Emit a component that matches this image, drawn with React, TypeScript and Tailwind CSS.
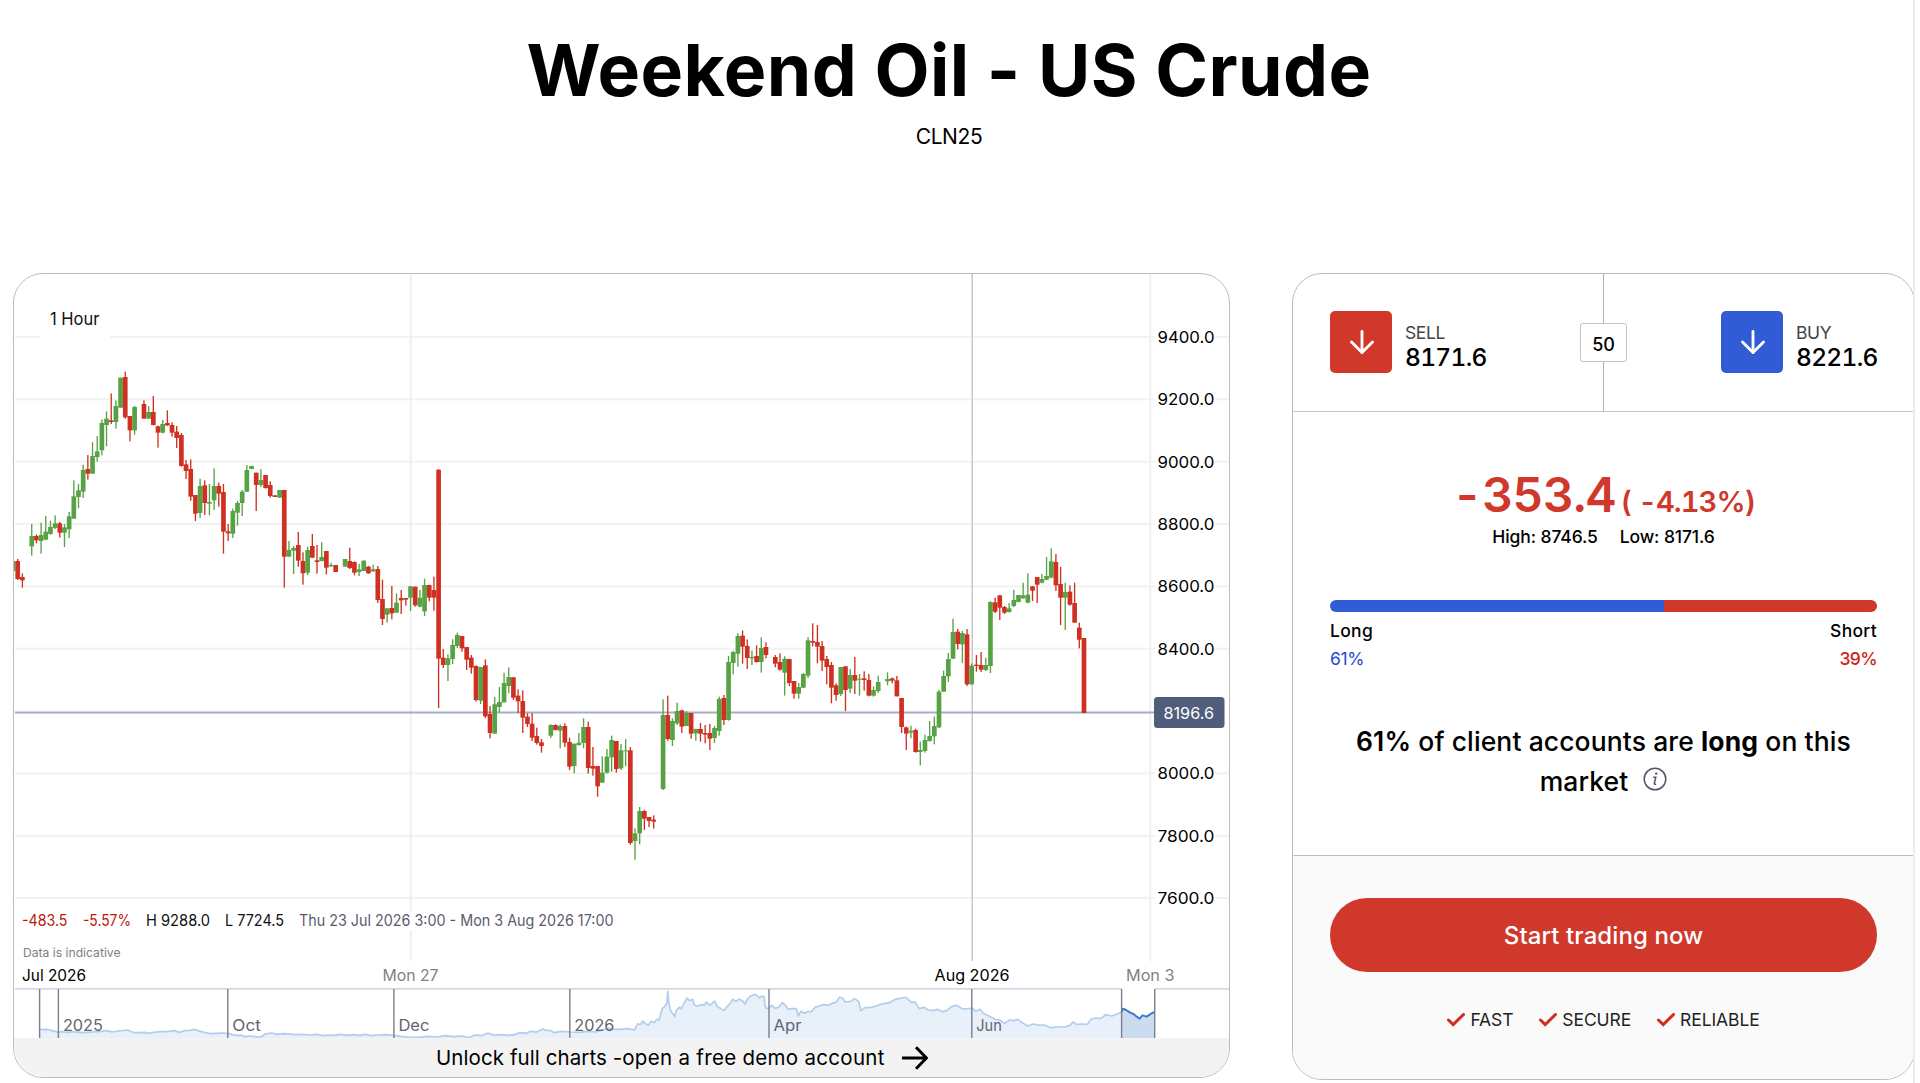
import { ArrowDown } from "lucide-react";

type Candle = [slot: number, high: number, top: number, bottom: number, low: number, up: 0 | 1];

// four runs of hourly candles, y values are thirds of a pixel below each run's own base
const runs: { base: number; candles: Candle[] }[] = [
  {
    base: 260,
    candles: [
      [-1, 904, 904, 933, 933, 1], [0, 897, 903, 957, 960, 0], [1, 940, 951, 961, 983, 0],
      [3, 792, 828, 859, 887, 1], [4, 823, 828, 841, 850, 0], [5, 788, 825, 843, 881, 1],
      [6, 768, 815, 839, 841, 1], [7, 782, 801, 822, 824, 1], [8, 766, 790, 804, 807, 1],
      [9, 786, 790, 818, 833, 0], [10, 792, 802, 818, 861, 1], [11, 756, 769, 808, 834, 1],
      [12, 661, 709, 776, 776, 1], [13, 672, 691, 711, 745, 1], [14, 614, 630, 695, 714, 1],
      [15, 585, 627, 641, 659, 0], [16, 547, 588, 641, 641, 1], [17, 528, 574, 591, 605, 1],
      [18, 478, 489, 571, 586, 1], [19, 454, 476, 495, 559, 1], [20, 400, 481, 486, 492, 0],
      [21, 421, 438, 486, 506, 1], [22, 353, 353, 443, 443, 1], [23, 335, 351, 472, 476, 0],
      [24, 468, 468, 511, 544, 0], [25, 438, 441, 511, 524, 1], [27, 421, 432, 476, 476, 0],
      [28, 438, 456, 476, 477, 1], [29, 408, 456, 495, 496, 0], [30, 497, 499, 518, 563, 0],
      [31, 480, 492, 518, 520, 1], [32, 451, 489, 496, 498, 0], [33, 487, 495, 518, 530, 0],
      [34, 498, 515, 534, 564, 0], [35, 519, 525, 618, 620, 0], [36, 600, 613, 633, 657, 0],
      [37, 598, 627, 710, 722, 0], [38, 705, 705, 761, 783, 0], [39, 656, 678, 759, 774, 1],
      [40, 661, 676, 729, 765, 0], [41, 672, 726, 731, 766, 1], [42, 625, 678, 721, 750, 1],
      [43, 668, 678, 701, 740, 0], [44, 672, 696, 815, 881, 0], [45, 792, 814, 820, 843, 0],
      [46, 746, 753, 821, 834, 1], [47, 723, 729, 758, 797, 1], [48, 690, 695, 729, 768, 1],
      [49, 615, 630, 695, 696, 1], [50, 617, 618, 627, 628, 1], [51, 638, 638, 675, 753, 0],
      [52, 627, 660, 675, 681, 1], [53, 645, 645, 684, 686, 0], [54, 664, 675, 708, 713, 0],
      [55, 706, 706, 711, 711, 0], [56, 690, 690, 713, 713, 1], [57, 690, 690, 890, 983, 0],
      [58, 843, 870, 890, 891, 1], [59, 858, 864, 872, 942, 1], [60, 816, 855, 902, 920, 0],
      [61, 877, 903, 940, 974, 0], [62, 860, 870, 938, 945, 1], [63, 822, 858, 893, 894, 0],
      [64, 855, 901, 906, 941, 0],
    ],
  },
  {
    base: 440,
    candles: [
      [65, 307, 351, 363, 364, 1], [66, 333, 333, 383, 403, 0], [67, 368, 375, 379, 381, 1],
      [68, 375, 375, 396, 396, 0], [70, 357, 357, 380, 380, 1], [71, 323, 363, 384, 387, 0],
      [72, 364, 366, 398, 406, 0], [73, 371, 388, 396, 408, 1], [74, 361, 362, 393, 393, 1],
      [75, 378, 380, 400, 401, 0], [76, 374, 388, 394, 396, 1], [77, 378, 387, 480, 489, 0],
      [78, 419, 477, 537, 555, 0], [79, 505, 505, 524, 548, 1], [80, 438, 504, 520, 538, 0],
      [81, 460, 488, 518, 518, 1], [82, 450, 474, 481, 522, 0], [83, 474, 474, 479, 497, 0],
      [84, 438, 439, 473, 513, 1], [85, 440, 440, 496, 500, 0], [86, 450, 473, 500, 502, 1],
      [87, 416, 435, 514, 528, 1], [88, 434, 435, 473, 484, 0], [89, 410, 450, 473, 512, 0],
      [90, 88, 89, 656, 804, 0], [91, 627, 653, 675, 684, 0], [92, 643, 655, 675, 723, 1],
      [93, 598, 615, 657, 672, 1], [94, 578, 585, 618, 624, 1], [95, 588, 588, 625, 635, 0],
      [96, 621, 621, 659, 690, 0], [97, 645, 653, 683, 701, 0], [98, 676, 678, 780, 785, 0],
      [99, 681, 681, 782, 792, 1], [100, 658, 676, 829, 834, 0], [101, 798, 822, 879, 895, 0],
      [102, 771, 793, 881, 881, 1], [103, 741, 786, 801, 817, 1], [104, 698, 729, 787, 788, 1],
      [105, 682, 711, 738, 760, 1], [106, 711, 712, 773, 780, 0], [107, 748, 767, 784, 819, 0],
      [108, 751, 783, 833, 879, 0], [109, 820, 830, 852, 861, 0], [110, 819, 851, 893, 903, 0],
      [111, 863, 888, 909, 914, 0], [112, 897, 907, 918, 938, 0], [114, 853, 855, 887, 894, 1],
      [115, 853, 855, 870, 871, 0], [116, 853, 858, 872, 925, 1], [117, 850, 858, 908, 921, 0],
      [118, 893, 906, 980, 990, 0], [119, 911, 911, 978, 1000, 1], [120, 879, 908, 915, 917, 1],
      [121, 835, 861, 909, 925, 1], [122, 845, 861, 984, 1001, 0], [123, 921, 978, 986, 1007, 0],
      [124, 978, 978, 1039, 1070, 0], [125, 949, 998, 1028, 1028, 1], [126, 927, 950, 998, 1001, 1],
    ],
  },
  {
    base: 580,
    candles: [
      [127, 467, 480, 532, 575, 1], [128, 483, 483, 567, 578, 0], [129, 492, 511, 565, 570, 1],
      [130, 477, 511, 514, 559, 1], [131, 501, 511, 789, 794, 0], [132, 745, 760, 783, 839, 1],
      [133, 681, 693, 760, 793, 1], [134, 690, 693, 716, 750, 0], [135, 711, 711, 723, 741, 0],
      [136, 706, 719, 725, 746, 0], [138, 358, 405, 627, 630, 1], [139, 347, 405, 477, 482, 0],
      [140, 415, 423, 480, 498, 1], [141, 368, 393, 430, 435, 1], [142, 389, 391, 440, 459, 0],
      [143, 393, 399, 438, 438, 1], [144, 399, 399, 461, 476, 0], [145, 446, 447, 460, 482, 1],
      [146, 429, 447, 461, 485, 0], [147, 435, 459, 464, 490, 0], [148, 432, 459, 476, 510, 0],
      [149, 438, 444, 474, 489, 1], [150, 350, 357, 453, 467, 1], [151, 345, 354, 420, 435, 0],
      [152, 228, 246, 420, 422, 1], [153, 212, 216, 249, 283, 1], [154, 159, 168, 221, 260, 1],
      [155, 151, 167, 200, 251, 0], [156, 178, 198, 234, 267, 0], [157, 212, 231, 235, 255, 1],
      [158, 196, 228, 246, 248, 0], [159, 172, 204, 246, 278, 1], [160, 187, 201, 225, 235, 0],
      [162, 225, 231, 251, 262, 0], [163, 220, 246, 269, 272, 0], [164, 229, 236, 278, 347, 1],
      [165, 237, 237, 309, 318, 0], [166, 303, 303, 341, 356, 0], [167, 309, 321, 341, 356, 1],
      [168, 279, 282, 323, 324, 1], [169, 171, 181, 287, 294, 1], [170, 130, 183, 188, 199, 0],
      [171, 135, 186, 200, 250, 0], [172, 183, 198, 242, 273, 0], [173, 228, 237, 261, 313, 0],
      [174, 246, 255, 323, 370, 0], [175, 310, 316, 345, 362, 0], [176, 261, 261, 342, 348, 1],
      [177, 259, 259, 330, 393, 0], [178, 267, 285, 326, 339, 1], [179, 231, 285, 302, 342, 0],
      [180, 282, 296, 299, 347, 1], [181, 274, 295, 300, 332, 0], [182, 282, 300, 347, 349, 0],
      [183, 319, 330, 347, 350, 1], [184, 287, 306, 333, 339, 1],
    ],
  },
  {
    base: 520,
    candles: [
      [186, 457, 477, 484, 496, 1], [187, 473, 475, 482, 490, 0], [188, 468, 481, 529, 529, 0],
      [189, 534, 534, 621, 639, 0], [190, 620, 622, 641, 690, 0], [191, 617, 632, 638, 655, 1],
      [192, 626, 630, 696, 698, 0], [193, 665, 690, 696, 736, 1], [194, 644, 660, 693, 698, 1],
      [195, 603, 648, 663, 665, 1], [196, 590, 618, 649, 673, 1], [197, 510, 515, 622, 624, 1],
      [198, 452, 468, 515, 516, 1], [199, 399, 417, 469, 486, 1], [200, 296, 336, 416, 417, 1],
      [201, 327, 335, 372, 388, 0], [202, 333, 339, 373, 429, 1], [203, 327, 343, 493, 498, 0],
      [204, 430, 437, 493, 494, 1], [205, 405, 434, 438, 455, 0], [206, 396, 435, 449, 456, 0],
      [207, 413, 435, 450, 453, 1], [208, 244, 246, 438, 459, 1], [209, 233, 247, 275, 279, 0],
      [210, 226, 226, 263, 300, 0], [211, 258, 261, 278, 282, 0], [212, 249, 265, 276, 278, 1],
      [213, 209, 240, 258, 261, 1], [214, 225, 225, 246, 247, 1], [215, 188, 226, 235, 236, 1],
      [216, 160, 224, 248, 250, 1], [217, 198, 199, 212, 243, 0], [218, 171, 171, 194, 249, 0],
      [219, 162, 177, 188, 190, 1], [220, 111, 168, 179, 181, 1], [221, 85, 124, 173, 175, 1],
      [222, 102, 126, 196, 213, 0], [223, 140, 192, 233, 315, 0], [224, 188, 216, 233, 330, 1],
      [225, 196, 215, 254, 257, 0], [226, 188, 249, 308, 309, 0], [227, 308, 323, 359, 385, 0],
      [228, 354, 354, 579, 579, 0],
    ],
  },
];

const prices = [
  { label: "9400.0", y: 337 },
  { label: "9200.0", y: 399.3 },
  { label: "9000.0", y: 461.7 },
  { label: "8800.0", y: 524 },
  { label: "8600.0", y: 586.4 },
  { label: "8400.0", y: 648.7 },
  { label: "8000.0", y: 773.4 },
  { label: "7800.0", y: 835.8 },
  { label: "7600.0", y: 898 },
];

const dates = [
  { label: "Jul 2026", x: 22, w: 64, fill: "#000000" },
  { label: "Mon 27", x: 382.5, w: 56, fill: "#828282" },
  { label: "Aug 2026", x: 934.5, w: 75, fill: "#000000" },
  { label: "Mon 3", x: 1126, w: 48.5, fill: "#828282" },
];

const months = [
  { label: "2025", x: 58.4, w: 40 },
  { label: "Oct", x: 227.8, w: 28.5 },
  { label: "Dec", x: 393.9, w: 31 },
  { label: "2026", x: 569.8, w: 40 },
  { label: "Apr", x: 769, w: 28 },
  { label: "Jun", x: 971.8, w: 25.5 },
];

const stats = [
  { label: "-483.5", x: 22, w: 45.5, fill: "#b8190c" },
  { label: "-5.57%", x: 83, w: 48, fill: "#b8190c" },
  { label: "H 9288.0", x: 146, w: 64, fill: "#111111" },
  { label: "L 7724.5", x: 225, w: 59, fill: "#111111" },
  { label: "Thu 23 Jul 2026 3:00 - Mon 3 Aug 2026 17:00", x: 299, w: 314.5, fill: "#5b5b6e" },
];

const history =
  "97,417 105,419 115,418 125,421 135,424 143,427 150,425 165,427 180,425 200,428 225,426 250,424 262,422 275,426 290,423 312,420 325,427 340,428 355,427 365,430 380,426 400,425 415,424 427,422 440,427 452,422 465,421 475,418 485,422 500,427 515,431 530,430 545,429 558,430 570,434 583,437 592,435 600,440 615,438 630,441 640,440 650,432 665,429 680,433 695,431 710,432 725,434 740,433 760,435 775,433 790,437 805,435 820,436 835,433 850,436 865,434 880,436 895,433 910,437 925,435 945,434 965,436 980,439 1000,441 1030,442 1050,439 1070,441 1090,437 1110,440 1130,438 1150,443 1160,436 1170,435 1180,437 1195,429 1210,435 1230,434 1245,436 1260,434 1275,428 1290,430 1300,424 1315,426 1330,417 1340,421 1350,422 1358,428 1375,424 1396,426 1420,427 1440,424 1460,426 1475,420 1490,415 1505,418 1519,418";

const recent =
  "0,418 20,416 35,420 44,401 50,404 56,393 62,401 70,405 76,394 84,398 90,388 96,390 100,370 104,355 108,352 112,345 115,340 117,304 120,340 124,362 130,372 134,380 138,362 145,352 150,356 158,338 162,330 164,324 170,332 178,328 182,345 190,348 200,344 206,346 212,336 220,346 226,340 232,333 238,350 246,355 254,362 262,350 270,340 276,328 284,334 292,328 300,332 306,342 312,328 320,318 328,314 335,316 342,324 347,318 353,320 355,345 358,355 365,354 372,346 380,355 388,352 398,338 404,344 412,358 420,356 432,356 437,378 443,364 452,370 462,364 468,366 478,352 488,348 498,344 510,346 520,340 530,336 537,322 545,324 552,336 565,334 575,326 585,335 590,362 600,353 615,352 628,348 640,342 650,340 660,338 675,328 690,324 700,322 706,328 715,338 722,335 733,356 745,352 755,360 768,362 778,358 790,365 800,362 812,350 825,346 838,356 850,357 862,354 872,364 882,358 890,370 900,376 910,382 920,388 930,390 942,400 955,390 965,392 975,388 985,398 1000,408 1012,402 1025,405 1040,405 1055,413 1072,411 1090,411 1102,406 1110,396 1118,403 1132,402 1145,403 1155,387 1165,384 1178,386 1190,374 1205,378 1218,372 1229,366";

const selected = "1229,366 1232,356 1240,360 1250,368 1258,372 1266,380 1273,386 1280,376 1290,380 1298,374 1302,370 1310,366";

function Label({ x, y, w, size, fill, children }: { x: number; y: number; w: number; size: number; fill: string; children: string }) {
  return (
    <text x={x} y={y} textLength={w} lengthAdjust="spacingAndGlyphs" fontSize={size} fill={fill}>
      {children}
    </text>
  );
}

function PriceChart() {
  return (
    <svg viewBox="14 274 1215 764" className="block h-[764px] w-[1215px]">
      {prices.map((price) => (
        <rect key={price.label} x={15} y={price.y - 1} width={1214} height={2} fill="#f2f2f2" />
      ))}
      <rect x={409.7} y={274} width={2} height={687} fill="#f0f0f0" />
      <rect x={1149.3} y={274} width={2} height={687} fill="#f0f0f0" />
      <rect x={971.5} y={274} width={1.5} height={687} fill="#c8c8cc" />
      <rect x={40} y={300} width={70} height={40} fill="#ffffff" />
      <rect x={15} y={711.5} width={1140} height={2} fill="#a4adbf" />

      {runs.map((run) => (
        <g key={run.base} transform={`translate(17.7 ${run.base}) scale(0.33333)`}>
          {run.candles.map(([slot, high, top, bottom, low, up]) => (
            <g key={slot} fill={up ? "#56a244" : "#cf3022"}>
              <rect x={slot * 14.03 - 2} y={high} width={4} height={low - high} />
              <rect x={slot * 14.03 - 7} y={top} width={14} height={bottom - top} />
            </g>
          ))}
        </g>
      ))}

      <Label x={50} y={325} w={49.5} size={17} fill="#111111">1 Hour</Label>
      {prices.map((price) => (
        <g key={price.label}>
          <rect x={1155} y={price.y - 8} width={60} height={16} fill="#ffffff" />
          <Label x={1157.5} y={price.y + 6} w={57} size={16.5} fill="#000000">{price.label}</Label>
        </g>
      ))}
      <rect x={1154} y={697} width={70.5} height={31} rx={3.5} fill="#505d7b" />
      <Label x={1163.5} y={718.5} w={50.5} size={16.5} fill="#ffffff">8196.6</Label>

      <rect x={20} y={912} width={596} height={18} fill="#ffffff" />
      {stats.map((stat) => (
        <Label key={stat.label} x={stat.x} y={926.3} w={stat.w} size={15.2} fill={stat.fill}>{stat.label}</Label>
      ))}
      <Label x={23} y={957} w={97.5} size={12} fill="#808080">Data is indicative</Label>
      {dates.map((date) => (
        <Label key={date.label} x={date.x} y={981} w={date.w} size={16} fill={date.fill}>{date.label}</Label>
      ))}

      {/* range navigator */}
      <g fill="#e8f0fa" stroke="none">
        <polygon transform="translate(0 890) scale(0.40816 0.33333)" points={`${history} 1519,444 97,444`} />
        <polygon transform="translate(620 890) scale(0.40816 0.33333)" points={`${recent} 1229,444 0,444`} />
        <polygon transform="translate(620 890) scale(0.40816 0.33333)" points={`${selected} 1310,444 1229,444`} fill="#ccdcf0" />
      </g>
      <g fill="none" stroke="#b3cdeb" strokeWidth={1.7} strokeLinejoin="round">
        <polyline transform="translate(0 890) scale(0.40816 0.33333)" points={history} vectorEffect="non-scaling-stroke" />
        <polyline transform="translate(620 890) scale(0.40816 0.33333)" points={recent} vectorEffect="non-scaling-stroke" />
        <polyline transform="translate(620 890) scale(0.40816 0.33333)" points={selected} vectorEffect="non-scaling-stroke" stroke="#3f7cc9" strokeWidth={2} />
      </g>
      <rect x={15} y={988} width={1107} height={1.7} fill="#d6d6de" />
      <rect x={1155} y={988} width={74} height={1.7} fill="#d6d6de" />
      {[39.6, 1121.6, 1154.7].map((x) => (
        <rect key={x} x={x - 0.7} y={989} width={1.4} height={49} fill="#7d7d90" />
      ))}
      {months.map((month) => (
        <g key={month.x}>
          <rect x={month.x - 0.7} y={989} width={1.4} height={49} fill="#7d7d90" />
          <Label x={month.x + 4.5} y={1030.7} w={month.w} size={16} fill="#646470">{month.label}</Label>
        </g>
      ))}
    </svg>
  );
}

function Quote({ side, price, color }: { side: string; price: string; color: string }) {
  return (
    <div className="flex items-start">
      <button className={`flex size-[62px] items-center justify-center rounded-[5px] ${color}`}>
        <ArrowDown className="ml-0.5 size-9 text-white" strokeWidth={1.9} />
      </button>
      <div className="ml-[13px] w-[82px] pt-[9px]">
        <p className="text-[17.5px] leading-[26px] tracking-[-0.4px] text-[#444444]">{side}</p>
        <p className="-mt-px text-[24.5px] font-medium leading-[24px] tracking-[-0.7px] whitespace-nowrap tabular-nums text-black">{price}</p>
      </div>
    </div>
  );
}

function Check({ label }: { label: string }) {
  return (
    <span className="flex items-center gap-[5px]">
      <svg viewBox="0 0 18 14" className="h-3.5 w-[18px]" fill="none" stroke="#cf2e20" strokeWidth={3}>
        <path d="M1.5 7 6.2 11.6 16.5 1.5" strokeLinecap="round" />
      </svg>
      <span>{label}</span>
    </span>
  );
}

export default function App() {
  return (
    <div className="h-[1083px] w-full overflow-hidden bg-white font-['Inter',sans-serif] text-black">
      <main className="h-full w-[1915px] overflow-hidden border-r-2 border-[#ececec]">
        <header className="flex h-[273px] w-[1898px] flex-col items-center pt-[25px]">
          <h1 className="text-[71.5px] font-bold leading-[90px] tracking-[0.4px]">Weekend Oil - US Crude</h1>
          <p className="mt-2 text-[21px] leading-[28px] tracking-[-0.4px]">CLN25</p>
        </header>

        <div className="flex w-[1920px] items-start pl-[13px]">
          <section className="w-[1217px] overflow-hidden rounded-[30px] border border-[#bdbdbd] bg-white">
            <PriceChart />
            <a className="flex h-[39px] items-center bg-[#f3f3f3] pl-[422px] pt-0.5 text-[20.5px]">
              <span className="tracking-[0.08px]">Unlock full charts -</span>
              <span className="tracking-[0.3px]">open a free demo account</span>
              <svg viewBox="0 0 26 24" className="mb-0.5 ml-[17px] h-6 w-[26px]" fill="none" stroke="#000" strokeWidth={3}>
                <path d="M0 12h24M14 1.2 24.5 12 14 22.8" />
              </svg>
            </a>
          </section>

          <section className="ml-[62px] w-[623px] overflow-hidden rounded-[30px] border border-[#bdbdbd] bg-white">
            <div className="grid h-[138px] grid-cols-[1fr_47px_1fr] border-b border-[#c4c4c4]">
              <div className="pl-[37px] pt-[37px]">
                <Quote side="SELL" price="8171.6" color="bg-[#cf382a]" />
              </div>
              <div className="flex flex-col items-center">
                <span className="h-[49px] w-px bg-[#b0b0b0]" />
                <span className="flex h-[39px] w-[47px] items-center justify-center rounded-[3px] border border-[#c4c4c4] pt-1 text-[18px] font-medium">
                  50
                </span>
                <span className="w-px flex-1 bg-[#b0b0b0]" />
              </div>
              <div className="flex justify-end pr-[36px] pt-[37px]">
                <Quote side="BUY" price="8221.6" color="bg-[#315cd6]" />
              </div>
            </div>

            <div className="h-[443px] px-[37px] pt-[53px]">
              <div className="flex h-[60px] items-baseline justify-center font-semibold leading-[60px] tabular-nums text-[#cf382a]">
                <span className="text-[48px] tracking-[-0.7px]">-353.4</span>
                <span className="ml-[5px] text-[29px] tracking-[-0.9px]">( -4.13%)</span>
              </div>
              <p className="flex justify-center gap-[22px] text-[17.5px] font-medium leading-[24px] tracking-[-0.1px]">
                <span>High: 8746.5</span>
                <span>Low: 8171.6</span>
              </p>
              <div className="mt-[51px] flex h-3 overflow-hidden rounded-full">
                <div className="w-[61%] bg-[#315cd6]" />
                <div className="flex-1 bg-[#cf382a]" />
              </div>
              <div className="mt-[5px] flex justify-between text-[17.5px] font-medium leading-[28px] tracking-[0.3px]">
                <div>
                  <p>Long</p>
                  <p className="font-normal tracking-[-0.4px] text-[#1f4bd1]">61%</p>
                </div>
                <div className="text-right">
                  <p>Short</p>
                  <p className="tracking-[-0.6px] text-[#cf2418]">39%</p>
                </div>
              </div>
              <p className="mt-[48px] text-center text-[26.5px] font-medium leading-[40px] tracking-[0.1px]">
                <span className="font-semibold">61%</span> of client accounts are <b className="font-bold">long</b> on this
                <br />
                market
                <svg viewBox="0 0 24 24" className="ml-[15px] inline-block size-6 align-[0px]" fill="none" stroke="#55556a">
                  <circle cx="12" cy="12" r="10.8" strokeWidth={1.5} />
                  <path d="M10.2 10.2h2.6l-1.5 6.2q-.2 1.4 1.8.6" strokeWidth={1.5} />
                  <circle cx="13.2" cy="6.6" r="1.2" fill="#55556a" stroke="none" />
                </svg>
              </p>
            </div>

            <div className="h-[224px] border-t border-[#bdbdbd] bg-[#fafafa] px-[37px] pt-[42px]">
              <button className="h-[74px] w-full rounded-full bg-[#cf382a] pt-0.5 text-[24px] font-medium tracking-[0.1px] text-white">
                Start trading now
              </button>
              <div className="mt-[35px] flex justify-center gap-[26px] text-[17.5px] leading-[26px] tracking-[-0.1px] text-[#222222]">
                <Check label="FAST" />
                <Check label="SECURE" />
                <Check label="RELIABLE" />
              </div>
            </div>
          </section>
        </div>
      </main>
    </div>
  );
}
